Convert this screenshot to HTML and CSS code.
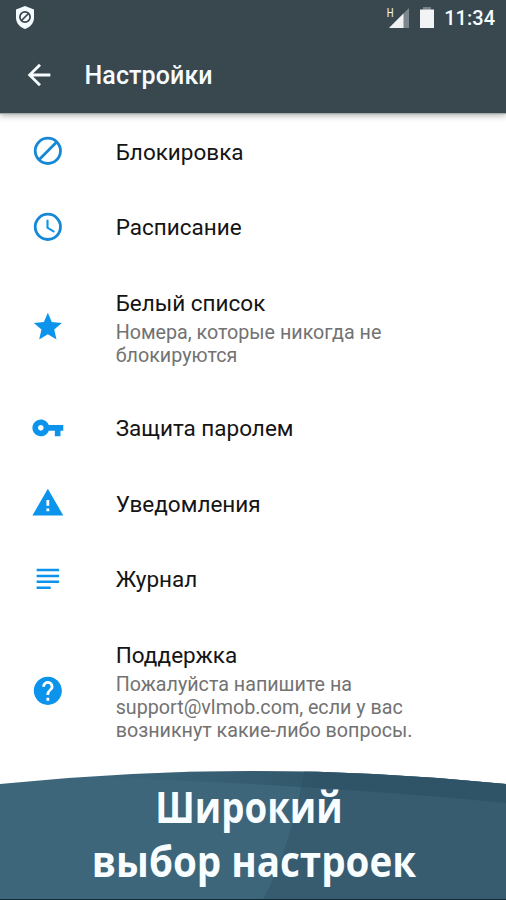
FILE: index.html
```html
<!DOCTYPE html>
<html lang="ru">
<head>
<meta charset="utf-8">
<title>Настройки</title>
<link rel="stylesheet" href="styles.css">
</head>
<body>
<div class="screen">
  <header class="header">
    <div class="status">
      <svg class="shield" viewBox="0 0 20 24"><path fill="#f4fcff" d="M10 0 19 3.500V12c0 5-4 9.500-9 11C5 21.500 1 17 1 12V3.500z"/><circle cx="10" cy="11" r="5.100" fill="none" stroke="#38474e" stroke-width="1.700"/><path d="m6.500 14.500 7-7" stroke="#38474e" stroke-width="1.700"/></svg>
      <div class="indicators">
        <span class="network">H</span>
        <svg class="signal" viewBox="0 0 20 20"><path fill="#7b878d" d="M20 0v20H0z"/><path fill="#f1f1f3" d="M14.500 5.500V20H0z"/></svg>
        <svg class="battery" viewBox="0 0 14 21"><path fill="#758087" d="M3 0h8v3H3z"/><path fill="#f1f3f5" d="M0 2.500h14V21H0z"/></svg>
        <span class="time">11:34</span>
      </div>
    </div>
    <div class="toolbar">
      <svg class="back" viewBox="0 0 24 24"><path d="M20 11H7.830l5.590-5.590L12 4l-8 8 8 8 1.410-1.410L7.830 13H20v-2z"/></svg>
      <h1 class="title">Настройки</h1>
    </div>
  </header>
  <main class="list">
    <div class="row">
      <svg class="icon" viewBox="0 0 24 24"><circle class="line" cx="12" cy="12" r="9"/><path class="line" d="M5.700 18.300 18.300 5.700"/></svg>
      <div class="text"><div class="name">Блокировка</div></div>
    </div>
    <div class="row">
      <svg class="icon" viewBox="0 0 24 24"><circle class="line" cx="12" cy="12" r="9"/><path d="M12.500 7H11v6l5.250 3.150.750-1.230-4.500-2.670z"/></svg>
      <div class="text"><div class="name">Расписание</div></div>
    </div>
    <div class="row two">
      <svg class="icon" viewBox="0 0 24 24"><path d="M12 17.270 18.180 21l-1.640-7.030L22 9.240l-7.190-.610L12 2 9.190 8.630 2 9.240l5.460 4.730L5.820 21z"/></svg>
      <div class="text"><div class="name">Белый список</div><div class="note">Номера, которые никогда не<br>блокируются</div></div>
    </div>
    <div class="row">
      <svg class="icon" viewBox="0 0 24 24"><path d="M12.650 10C11.830 7.670 9.610 6 7 6c-3.310 0-6 2.690-6 6s2.690 6 6 6c2.610 0 4.830-1.670 5.650-4H17v4h4v-4h2v-4H12.650zM7 14c-1.100 0-2-.900-2-2s.900-2 2-2 2 .900 2 2-.900 2-2 2z"/></svg>
      <div class="text"><div class="name">Защита паролем</div></div>
    </div>
    <div class="row">
      <svg class="icon" viewBox="0 0 24 24"><path d="M1 21h22L12 2 1 21zm12-3h-2v-2h2v2zm0-4h-2v-4h2v4z"/></svg>
      <div class="text"><div class="name">Уведомления</div></div>
    </div>
    <div class="row">
      <svg class="icon" viewBox="0 0 24 24"><path d="M20 9H4v1.800h16V9zm0 4.200H4V15h16v-1.800zM20 4.800H4v1.800h16V4.800zM14 17.400H4v1.800h10v-1.800z"/></svg>
      <div class="text"><div class="name">Журнал</div></div>
    </div>
    <div class="row three">
      <svg class="icon" viewBox="0 0 24 24"><path d="M12 2C6.480 2 2 6.480 2 12s4.480 10 10 10 10-4.480 10-10S17.520 2 12 2zm1 17h-2v-2h2v2zm2.070-7.750-.900.920C13.450 12.900 13 13.500 13 15h-2v-.500c0-1.100.450-2.100 1.170-2.830l1.240-1.260c.370-.360.590-.860.590-1.410 0-1.100-.900-2-2-2s-2 .900-2 2H8c0-2.210 1.790-4 4-4s4 1.790 4 4c0 .880-.360 1.680-.930 2.250z"/></svg>
      <div class="text"><div class="name">Поддержка</div><div class="note">Пожалуйста напишите на<br>support@vlmob.com, если у вас<br>возникнут какие-либо вопросы.</div></div>
    </div>
  </main>
  <footer class="banner">
    <svg class="curve" viewBox="0 0 506 132" preserveAspectRatio="none">
      <defs>
        <clipPath id="hill"><path d="M0 16Q126 3 253 3T506 16V132H0z"/></clipPath>
        <linearGradient id="fade" x1="0" x2="1"><stop offset=".2" stop-color="#2c5063" stop-opacity="0"/><stop offset=".65" stop-color="#2c5063" stop-opacity=".7"/></linearGradient>
      </defs>
      <g clip-path="url(#hill)">
        <path fill="#3d667b" d="M0 0h506v132H0z"/>
        <path fill="#375c6f" d="M305 0h201v132H263Q291 78 305 0z"/>
        <path fill="url(#fade)" d="M0 0h506v35Q330 18 120 10L0 16z"/>
      </g>
      <path fill="#102b38" d="M0 131h506v1H0z"/>
    </svg>
    <div class="slogan"><div class="first">Широкий</div><div class="second">выбор настроек</div></div>
  </footer>
</div>
</body>
</html>
```
FILE: styles.css
```css
* { box-sizing: border-box; }
body { margin: 0; background: #fff; font-family: Roboto, "Liberation Sans", sans-serif; }
svg { display: block; flex: none; }
.screen { height: 900px; display: flex; flex-direction: column; overflow: hidden; }
.header { height: 113px; flex: none; background: #39484f; color: #f6fcff; box-shadow: 0 1px 1px #a4aaa9, 0 3px 6px rgba(0,0,0,.28); }
.status { height: 36px; padding: 0 11px 0 15px; display: flex; justify-content: space-between; align-items: center; }
.shield { width: 20px; height: 24px; }
.indicators { display: flex; align-items: center; height: 36px; }
.network { font-size: 12px; line-height: 12px; align-self: flex-start; margin-top: 7px; transform: scaleX(.8); }
.signal { width: 20px; height: 20px; margin-left: -5px; }
.battery { width: 14px; height: 21px; margin: -1px 10px 0 11px; }
.time { font-size: 20px; font-weight: 500; line-height: 36px; }
.toolbar { height: 77px; display: flex; align-items: center; padding-left: 22px; }
.back { width: 34px; height: 34px; fill: #f6fcff; }
.title { margin: 2px 0 0 28.500px; font-size: 25px; font-weight: 500; line-height: 30px; letter-spacing: .1px; }
.list { flex: 1; padding-top: .5px; }
.row { height: 75.500px; display: flex; align-items: center; padding-left: 31px; }
.two { height: 125.500px; }
.three { height: 149px; }
.icon { width: 33.700px; height: 33.700px; fill: #0c94ed; }
.line { fill: none; stroke: #1688d5; stroke-width: 2; }
.text { margin-left: 51px; padding-top: 1px; white-space: nowrap; }
.name { font-size: 22.500px; line-height: 28px; color: #141414; }
.note { font-size: 19.700px; line-height: 23px; color: #727272; padding-top: 4px; }
.banner { height: 132px; flex: none; display: grid; }
.curve, .slogan { grid-area: 1 / 1; }
.curve { width: 506px; height: 132px; }
.slogan { z-index: 1; padding-top: 12px; text-align: center; font-family: "Open Sans", "Noto Sans", sans-serif; font-weight: 700; font-size: 43px; line-height: 54px; color: #f8fdff; white-space: nowrap; }
.first { transform: translateX(-4px) scaleX(.853); }
.second { transform: translateX(1px) scaleX(.897); }
```
